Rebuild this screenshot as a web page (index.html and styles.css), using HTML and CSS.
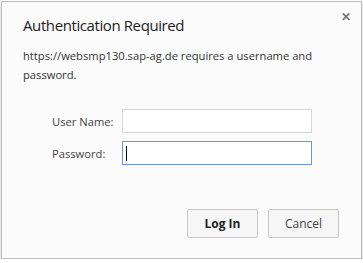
FILE: index.html
```html
<!DOCTYPE html>
<html lang="en">
<head>
  <meta charset="UTF-8" />
  <title>Authentication Required</title>
  <link rel="stylesheet" href="styles.css">
</head>
<body>
  <div class="dialog">
    <div class="head">
      <h1>Authentication Required</h1>
      <span class="close">&#x2715;</span>
    </div>
    <p class="msg">https://websmp130.sap-ag.de requires a username and password.</p>
    <div class="form">
      <label class="row">
        <span class="lbl">User Name:</span>
        <input type="text" class="field">
      </label>
      <label class="row">
        <span class="lbl">Password:</span>
        <span class="field focus"><span class="caret"></span></span>
      </label>
    </div>
    <div class="actions">
      <button class="btn primary">Log In</button>
      <button class="btn">Cancel</button>
    </div>
  </div>
</body>
</html>
```
FILE: styles.css
```css
body {
  margin: 0;
  background: #fff;
  font-family: 'Open Sans', sans-serif;
  color: #333;
}
.dialog {
  box-sizing: border-box;
  width: 361px;
  height: 258px;
  margin: 1px 0 0 1px;
  border: 1px solid #bdbdbd;
  background: #fbfbfb;
  box-shadow: 0 2px 3px rgba(0, 0, 0, 0.25);
  display: flex;
  flex-direction: column;
  padding: 0 0 0 21px;
}
.head {
  display: flex;
  justify-content: space-between;
  align-items: flex-start;
  height: 44px;
}
h1 {
  margin: 0;
  padding-top: 13px;
  font-size: 15px;
  letter-spacing: -0.4px;
  font-weight: normal;
  color: #222;
}
.close {
  margin: 6px 10px 0 0;
  font-size: 12px;
  font-weight: bold;
  color: #777;
}
.msg {
  margin: 0;
  width: 300px;
  font-size: 11.2px;
  line-height: 19px;
  color: #333;
}
.form {
  margin: 25px 0 0 29px;
  display: flex;
  flex-direction: column;
  gap: 8px;
}
.row {
  display: flex;
  align-items: center;
}
.lbl {
  width: 70px;
  font-size: 11.2px;
  color: #444;
}
.field {
  box-sizing: border-box;
  width: 190px;
  height: 24px;
  border: 1px solid #d6d6d6;
  background: #fff;
  margin: 0;
  padding: 0;
  display: flex;
  align-items: center;
}
.focus {
  border-color: #6d94d3;
}
.caret {
  width: 1px;
  height: 15px;
  margin-left: 3px;
  background: #000;
}
.actions {
  margin: 44px 0 0 0;
  padding-right: 22px;
  display: flex;
  justify-content: flex-end;
  gap: 10px;
}
.btn {
  box-sizing: border-box;
  width: 71px;
  height: 29px;
  border: 1px solid #c8c8c8;
  border-radius: 2px;
  background: #f6f6f6;
  font-family: 'Open Sans', sans-serif;
  font-size: 12px;
  color: #444;
  padding: 0;
}
.primary {
  font-weight: bold;
  color: #222;
}
```
